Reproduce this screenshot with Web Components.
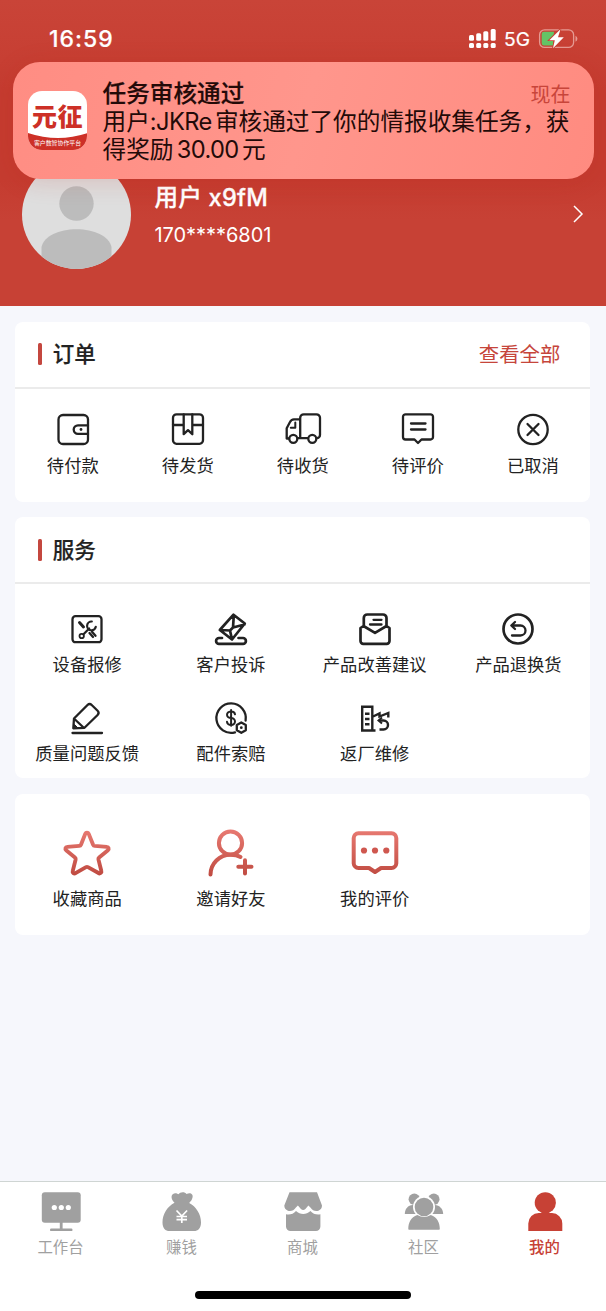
<!DOCTYPE html>
<html lang="zh-CN">
<head>
<meta charset="utf-8">
<title>我的</title>
<style>
html,body{margin:0;padding:0}
body{width:606px;height:1311px;overflow:hidden;background:#f6f7fc;font-family:Inter,"Noto Sans CJK SC",sans-serif;color:#222}
</style>
</head>
<body>
<mine-page></mine-page>
<script>
const L = 'fill="none" stroke="currentColor" stroke-linecap="round" stroke-linejoin="round"';
const S = L + ' stroke-width="2.300"';
const B = L + ' stroke-width="2.700"';
const GRAD = '<defs><linearGradient id="g" x1="0" y1="0" x2="0" y2="48" gradientUnits="userSpaceOnUse"><stop offset="0" stop-color="#e87a72"/><stop offset="1" stop-color="#bf4a40"/></linearGradient></defs>';
const G = 'fill="none" stroke="url(#g)" stroke-width="4" stroke-linecap="round" stroke-linejoin="round"';
const ICONS = {
  wallet: [32, 32, `<g ${S}><rect x="1.5" y="2" width="29.5" height="29" rx="4.5"/><path d="M31 12.3H21a4.3 4.3 0 0 0 0 8.6H31"/></g><circle cx="24" cy="16.5" r="1.4" fill="currentColor"/>`],
  box: [32, 32, `<g ${S}><rect x="1" y="1.3" width="30" height="29.5" rx="3.5"/><path d="M1 12H11.7M20.3 12H31M11.7 1.5V21.2L16 17.2l4.3 4V1.5"/></g>`],
  truck: [40, 32, `<g ${S}><path d="M6 25.500H3.700V15.200L7 9A4.500 4.500 0 0 1 11 6.300H17M17.200 25.200V4.800a3.500 3.500 0 0 1 3.500-3.500H33.500A3.500 3.500 0 0 1 37 4.800V22a3.200 3.200 0 0 1-3.200 3.200M14.800 25.200H24.800"/><path d="M12.300 9.500V14.800H7.800" stroke-width="2"/><circle cx="10.300" cy="25.800" r="4"/><circle cx="29.300" cy="25.800" r="4"/></g>`],
  comment: [32, 32, `<g ${S}><path d="M3.500 1.300h25a2.500 2.500 0 0 1 2.500 2.500V24a2.500 2.500 0 0 1-2.500 2.500H19.500L16 30l-3.500-3.500H3.500A2.500 2.500 0 0 1 1 24V3.800A2.500 2.500 0 0 1 3.500 1.300z"/><path d="M9 10.500H23.500M9 16.500H23.500"/></g>`],
  cancel: [32, 32, `<g ${S}><circle cx="16" cy="16.500" r="14.700"/><path d="M10.500 11L21.500 22M21.500 11L10.500 22"/></g>`],
  repair: [32, 32, `<g ${S}><rect x="1.500" y="3.200" width="29" height="26" rx="3"/><g stroke-width="1.800"><circle cx="10.700" cy="23" r="2.200"/><path d="M12.500 21.200L18.200 15.500M20.800 8.500a4.400 4.400 0 1 0 4 5.300" stroke-width="2.200"/><path d="M8.500 9.500L12.500 14" stroke-width="3"/><path d="M18.500 20l3.500 4M21 18.800l3.500 4" stroke-width="2.300"/></g></g>`],
  complaint: [32, 32, `<g ${B}><path d="M18.500 1.700L29.800 10.500 17 26.500 4.800 17zM18.800 2.500L18 14.500 29.500 11.500M18 14.500L15 17.500 6 17M15 17.500L16.800 25.500"/><path d="M7 25H4a2.800 2.800 0 0 0 0 5.800H28A2.900 2.900 0 0 0 28 25H23.500"/></g>`],
  suggest: [32, 32, `<g ${B}><path d="M4.800 13V5a3.500 3.500 0 0 1 3.500-3.500H24A3.500 3.500 0 0 1 27.500 5V13M4.500 13L16 19.800 27.500 13 30.500 15V28a2.800 2.800 0 0 1-2.800 2.800H4.300A2.800 2.800 0 0 1 1.500 28V15z"/><path d="M14.500 6.800H22.500M11 11.500H22.500" stroke-width="2.300"/></g>`],
  refund: [32, 32, `<g ${B}><circle cx="16" cy="16" r="14.500"/><path d="M9.500 12.500H18.500a5 5 0 0 1 0 10H10M13 9L9.300 12.500 13 16" stroke-width="2.300"/></g>`],
  feedback: [32, 32, `<g ${S}><path d="M2.300 26.300L3 16.500 16.500 3a3 3 0 0 1 4.200 0L26.600 8.800a3 3 0 0 1 0 4.200L13.500 25.800zM3.500 17L12.500 25.500M1.500 31H31"/><path d="M2.500 26L3.500 22.500l3 3z" fill="currentColor" stroke-width="1"/></g>`],
  claim: [32, 32, `<g ${S}><path d="M20 30.300A14.700 14.700 0 1 1 30.600 18.500"/><path d="M20 12.300a4 3.300 0 1 0-3.900 3.700 4 3.500 0 1 1-4.100 3.800M16.100 8V23.800" stroke-width="2"/><path d="M26.300 20.500l4.500 2.600v5.100l-4.500 2.600-4.500-2.600v-5.100z" fill="#fff"/></g><circle cx="26.300" cy="25.700" r="1.400" fill="currentColor"/>`],
  factory: [32, 32, `<g fill="none" stroke="currentColor" stroke-width="2.400"><path d="M16.500 28.500H3.200V4.700H13.300V28.500M13 15L20.500 11.500V14.500L29.300 11V15.500M6 11.800H10.500M6 17H10.500M6 22.300H10.500"/><path d="M20 18.500H24.500a4.500 4.500 0 0 1 0 9H20.500"/><path d="M23 15.500L19.500 18.500 23 21.500" stroke-width="2"/></g>`],
  star: [48, 48, GRAD + `<path ${G} d="M22.200 4.500a2 2 0 0 1 3.600 0l4.500 11.200a2 2 0 0 0 1.700 1.200l12.500 1a1.900 1.900 0 0 1 1.100 3.400L36.500 28.800a2 2 0 0 0-.7 2l3 12a1.900 1.900 0 0 1-2.900 2.100L25 38.800a2 2 0 0 0-2 0L12.200 45a1.900 1.900 0 0 1-2.900-2.100l3-12a2 2 0 0 0-.7-2L2.500 21.300a1.900 1.900 0 0 1 1.100-3.400l12.500-1a2 2 0 0 0 1.700-1.200z" transform="translate(.7 .5) scale(.97)"/>`],
  invite: [48, 48, GRAD + `<g ${G}><circle cx="23.500" cy="14" r="11.600"/><path d="M3.500 45.500A20 20 0 0 1 23.500 25.700C27.500 25.700 30.800 26.300 33.500 28M31.300 37.800H44.500M38 31.200V44.500"/></g>`],
  review: [48, 48, GRAD + `<path ${G} d="M7.500 4.200h33A5 5 0 0 1 45.300 9V34.300A5 5 0 0 1 40.500 39H30L24 43 18 39H7.500A5 5 0 0 1 2.700 34.300V9A5 5 0 0 1 7.500 4.200z"/><g fill="#cf574f"><circle cx="13" cy="21.500" r="3.100"/><circle cx="24" cy="21.500" r="3.100"/><circle cx="35.300" cy="21.500" r="3.100"/></g>`],
  desk: [40, 40, `<g fill="currentColor"><rect x=".8" y=".3" width="38.900" height="30.400" rx="3"/><rect x="18.800" y="30" width="2.800" height="7"/><rect x="9" y="36.500" width="22.500" height="2.600" rx="1.200"/></g><g fill="#fff"><circle cx="13.300" cy="15.500" r="2.600"/><circle cx="20.300" cy="15.500" r="2.600"/><circle cx="27.300" cy="15.500" r="2.600"/></g>`],
  money: [40, 40, `<path fill="currentColor" d="M12.500 10.800C8.500 7 8.500 1.800 13 1.300c2 0 3 .7 3.500 1C18-.4 23-.4 24.500 2c3.500-2 7-.3 6 3.500-.5 2.500-2 4-3.300 5.500C34 14.500 39 22 39 30.500c0 6-3 8.500-7 8.500H7.500c-4 0-7-2.500-7-8.500 0-8.500 5-16 12-19.700z"/><path d="M14.500 18.500L19.800 24l5.300-5.500M14.500 24.500H25M14.500 27.700H25M19.800 24V31" fill="none" stroke="#fff" stroke-width="1.700"/>`],
  shop: [40, 40, `<g fill="currentColor"><path d="M6.500.3H34L39 13.500a5.600 5.600 0 0 1-3.600 5.200c-3 1-6-.2-8-3.200l-2-2-3 3.500c-1.500 1.300-3 1.300-4.500 0l-3-3.500-2 2c-2 3-5 4.200-8 3.200A5.600 5.600 0 0 1 1.300 13.500z"/><path d="M3 22.300c4 .7 7.500-.3 10-3.300 4.200 4 10.300 4 14.400 0 2.600 3 6.200 4 10 3.300V34.500a4.500 4.500 0 0 1-4.500 4.500H7.500A4.500 4.500 0 0 1 3 34.500z"/></g>`],
  people: [40, 40, `<g fill="currentColor"><circle cx="10.300" cy="7.300" r="5.700"/><circle cx="29.800" cy="7.300" r="5.700"/><path d="M.8 22c.3-5.500 3-8.500 8-9h22c5 .5 8 3.500 8.400 9z"/></g><circle cx="20" cy="15" r="11" fill="#fff"/><path d="M2.500 22.200H37V27H2.500z" fill="#fff"/><circle cx="20" cy="15" r="9.300" fill="currentColor"/><path d="M4.300 37c0-6 2.500-11.800 9-14a13 13 0 0 0 13.500 0c6.500 2.200 9 8 9 14 0 .5-.3.800-.8.800H5c-.5 0-.7-.3-.7-.8z" fill="currentColor"/>`],
  me: [40, 40, `<g fill="currentColor"><circle cx="20.300" cy="10.800" r="10.600"/><path d="M3.300 39V31.500A10.500 10.500 0 0 1 13.800 21H27A10.500 10.500 0 0 1 37.300 31.500V39z"/></g>`],
  chevron: [10, 18, `<path d="M1 1L9 9 1 17" fill="none" stroke="currentColor" stroke-width="1.500"/>`],
  signal: [28, 20, `<g fill="#fff"><rect y="6" width="5" height="5.800" rx="1.500"/><rect x="7.200" y="4.300" width="5" height="7.500" rx="1.500"/><rect x="14.300" y="2.200" width="5" height="9.600" rx="1.500"/><rect x="21.700" width="5" height="11.800" rx="1.500"/><rect y="14" width="5" height="5" rx="1.500"/><rect x="7.200" y="14" width="5" height="5" rx="1.500"/><rect x="14.300" y="14" width="5" height="5" rx="1.500"/><rect x="21.700" y="14" width="5" height="5" rx="1.500"/></g>`],
  battery: [40, 20, `<rect x=".6" y=".8" width="34" height="17.600" rx="5" fill="none" stroke="#e59a92" stroke-width="1.300"/><path d="M36.500 6.700a3.300 3.300 0 0 1 0 6z" fill="#e59a92"/><path d="M5 2.700H15L14 16.500H5A2.300 2.300 0 0 1 2.700 14.200V5A2.300 2.300 0 0 1 5 2.700z" fill="#64c466"/><path d="M21.500.2L10.300 11.200h5.500L14 19.200 24.800 8.200H19z" fill="#fff" stroke="#c74135" stroke-width="1.800" paint-order="stroke"/>`],
  avatar: [109, 109, `<defs><clipPath id="c"><circle cx="54.500" cy="54.500" r="54.500"/></clipPath></defs><g clip-path="url(#c)"><path d="M0 0H109V109H0z" fill="#dedede"/><circle cx="54.500" cy="43.500" r="17.200" fill="#bcbcbc"/><path d="M19.500 109V87C22 76 37 69.300 54.500 69.300S87 76 89.500 87V109z" fill="#bcbcbc"/></g>`],
  flag: [60, 20, `<path d="M0 1Q30 11 60 1V20H0z" fill="#cd3027"/>`]
};
function define(name, css, html) {
  customElements.define(name, class extends HTMLElement {
    connectedCallback() {
      if (this.shadowRoot) return;
      const t = document.createElement('template');
      t.innerHTML = `<style>${css}</style>` + (typeof html === 'function' ? html(this) : html);
      this.attachShadow({ mode: 'open' }).append(t.content.cloneNode(true));
    }
  });
}
define('ui-icon', ':host{display:block;flex:none}svg{display:block;overflow:visible}', el => {
  const [w, h, body] = ICONS[el.getAttribute('name')];
  return `<svg width="${w}" height="${h}" viewBox="0 0 ${w} ${h}">${body}</svg>`;
});
define('status-bar', `
:host{display:flex;align-items:center;height:77px;padding:0 27.500px 0 49px;box-sizing:border-box;color:#fff}
.time{flex:1;font-size:23px;font-weight:500;line-height:30px;letter-spacing:1px;-webkit-text-stroke:.2px}
.net{font-size:19.200px;font-weight:400;line-height:24px;margin:1px 8.500px 0 7.500px;-webkit-text-stroke:.2px}
`, `<span class="time">16:59</span><ui-icon name="signal"></ui-icon><span class="net">5G</span><ui-icon name="battery"></ui-icon>`);
define('push-notice', `
:host{position:absolute;left:12.500px;top:62px;width:581px;height:117px;box-sizing:border-box;border-radius:27px;background:linear-gradient(105deg,#ff8d83,#ff968c 50%,#ff8b80);box-shadow:0 3px 24px rgba(180,30,20,.16);padding:17.500px 20px 0 15.500px;display:flex;gap:15.500px;color:#230a08}
.app{width:59px;height:59px;margin-top:11.500px;border-radius:14px;background:#fff;overflow:hidden;flex:none;display:flex;flex-direction:column;color:#cd3027}
.brand{height:42px;line-height:52px;text-align:center;font-size:25px;font-weight:900;white-space:nowrap;letter-spacing:.5px}
.tag{height:17px;position:relative}
.tag ui-icon{position:absolute;left:0;top:-1px}
.tag span{position:absolute;left:0;right:0;top:6px;text-align:center;color:#fff;font-size:5.900px;line-height:8px;white-space:nowrap}
.body{flex:1;line-height:28px;font-size:23.650px}
.row{display:flex;justify-content:space-between}
b{font-weight:500;-webkit-text-stroke:.2px}
.now{font-size:20px;line-height:30px;height:28px;color:#c8453a;margin-right:3px}
p{margin:0;white-space:nowrap;word-spacing:-2.800px;padding-top:.5px;height:27.500px}
p span{letter-spacing:-.600px}
`, `<div class="app"><div class="brand">元征</div><div class="tag"><ui-icon name="flag"></ui-icon><span>客户数智协作平台</span></div></div>
<div class="body"><div class="row"><b>任务审核通过</b><span class="now">现在</span></div><p>用户<span>:JKRe </span>审核通过了你的情报收集任务，获</p><p>得奖励<span> 30.00 </span>元</p></div>`);
define('user-header', `
:host{display:block;position:relative;height:306px;background:linear-gradient(#c94438,#c73f33 60px,#c53c30 90px,#c53c30 180px,#c74135 220px)}
.user{display:flex;align-items:center;height:109px;margin-top:82.500px;padding:0 23px 0 21.500px;color:#fff}
.info{flex:1;margin-left:24px;margin-top:2px}
.name{font-size:23.600px;font-weight:500;line-height:36px;letter-spacing:.200px;-webkit-text-stroke:.3px}
.phone{font-size:20px;line-height:30px;margin-top:4px;letter-spacing:-.050px}
`, `<status-bar></status-bar><div class="user"><ui-icon name="avatar"></ui-icon><div class="info"><div class="name">用户 x9fM</div><div class="phone">170****6801</div></div><ui-icon name="chevron"></ui-icon></div><push-notice></push-notice>`);
define('panel-card', `
:host{display:block;margin:0 15.700px 0 15.300px;background:#fff;border-radius:8px}
header{display:flex;align-items:center;height:65px;padding:0 30px 0 23px;border-bottom:2px solid #ebebeb}
i{width:3.500px;height:22px;border-radius:1.500px;background:#c4473f;margin-right:11px}
h2{flex:1;margin:0;font-size:21.500px;font-weight:500;line-height:30px;-webkit-text-stroke:.2px}
a{font-size:20.400px;line-height:30px;color:#c6453b;padding-top:2px}
.grid{display:grid;grid-template-columns:repeat(var(--cols),1fr)}
`, el => (el.hasAttribute('heading') ? `<header><i></i><h2>${el.getAttribute('heading')}</h2><a>${el.getAttribute('more') || ''}</a></header>` : '') + `<div class="grid"><slot></slot></div>`);
define('menu-item', `
:host{display:flex;flex-direction:column;align-items:center}
span{font-size:17.300px;line-height:26px;margin-top:var(--gap,7.500px);white-space:nowrap}
`, el => `<ui-icon name="${el.getAttribute('icon')}"></ui-icon><span><slot></slot></span>`);
define('tab-item', `
:host{flex:1;display:flex;flex-direction:column;align-items:center;color:#a0a0a0}
:host([active]){color:#c74135;font-weight:500}
span{font-size:15.400px;line-height:24px;margin-top:3.500px}
`, el => `<ui-icon name="${el.getAttribute('icon')}"></ui-icon><span><slot></slot></span>`);
define('tab-bar', `
:host{display:flex;flex-direction:column;height:130px;box-sizing:border-box;border-top:1px solid #cfd5d3;background:#fff}
.tabs{display:flex;padding:10px 1px 0 0;height:99px}
.home{width:216px;height:8px;border-radius:4px;background:#000;margin:0 auto;flex:none}
`, `<div class="tabs"><slot></slot></div><div class="home"></div>`);
define('mine-page', `
:host{display:flex;flex-direction:column;width:606px;height:1311px}
panel-card{flex:none;box-sizing:border-box}
.orders{--cols:5;height:180px;margin-top:15.500px}
.orders menu-item{padding-top:24.500px}
.services{--cols:4;height:261px;margin-top:15.500px;--gap:7px}
.services menu-item{padding-top:29px;height:59.500px}
.extras{--cols:4;height:141px;margin-top:16px;--gap:9px}
.extras menu-item{padding-top:34.500px}
tab-bar{margin-top:auto}
`, `<user-header></user-header>
<panel-card class="orders" heading="订单" more="查看全部"><menu-item icon="wallet">待付款</menu-item><menu-item icon="box">待发货</menu-item><menu-item icon="truck">待收货</menu-item><menu-item icon="comment">待评价</menu-item><menu-item icon="cancel">已取消</menu-item></panel-card>
<panel-card class="services" heading="服务"><menu-item icon="repair">设备报修</menu-item><menu-item icon="complaint">客户投诉</menu-item><menu-item icon="suggest">产品改善建议</menu-item><menu-item icon="refund">产品退换货</menu-item><menu-item icon="feedback">质量问题反馈</menu-item><menu-item icon="claim">配件索赔</menu-item><menu-item icon="factory">返厂维修</menu-item></panel-card>
<panel-card class="extras"><menu-item icon="star">收藏商品</menu-item><menu-item icon="invite">邀请好友</menu-item><menu-item icon="review">我的评价</menu-item></panel-card>
<tab-bar><tab-item icon="desk">工作台</tab-item><tab-item icon="money">赚钱</tab-item><tab-item icon="shop">商城</tab-item><tab-item icon="people">社区</tab-item><tab-item icon="me" active>我的</tab-item></tab-bar>`);
</script>
</body>
</html>
